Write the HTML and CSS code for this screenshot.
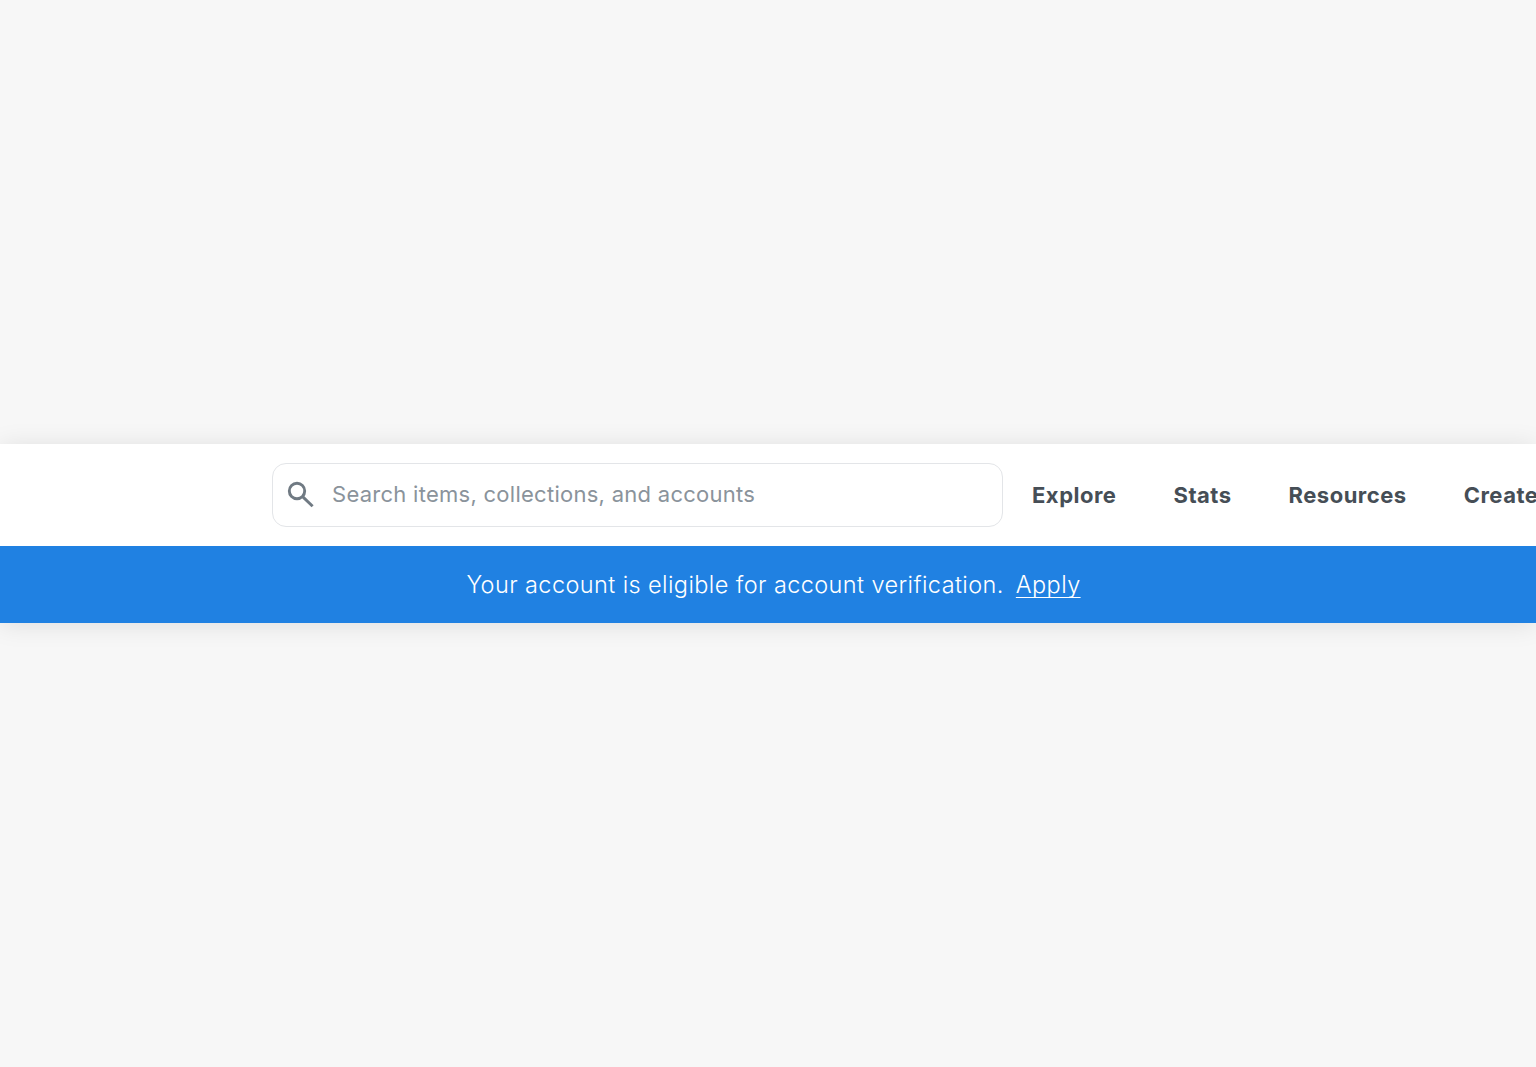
FILE: index.html
```html
<!DOCTYPE html>
<html lang="en">
<head>
<meta charset="utf-8">
<title>Account verification</title>
<link rel="stylesheet" href="styles.css">
</head>
<body>
<div class="page">
  <header class="header">
    <nav class="navbar">
      <div class="search">
        <svg class="search-icon" viewBox="0 0 28 28" width="28" height="28"><circle cx="10" cy="10" r="7.7"/><path d="M15.6 15.6 25.6 25.2"/></svg>
        <span class="placeholder">Search items, collections, and accounts</span>
      </div>
      <ul class="links">
        <li>Explore</li>
        <li>Stats</li>
        <li>Resources</li>
        <li>Create</li>
      </ul>
    </nav>
    <div class="banner">
      <span>Your account is eligible for account verification.</span>
      <a class="apply" href="#">Apply</a>
    </div>
  </header>
</div>
</body>
</html>
```
FILE: styles.css
```css
* { box-sizing: border-box; }
html, body { margin: 0; height: 100%; }
body { background: #f7f7f7; font-family: "Inter", "Liberation Sans", sans-serif; overflow: hidden; }
.page { height: 1067px; padding-top: 444px; overflow: hidden; }
.header { background: #fff; box-shadow: 0 2px 24px rgba(0,0,0,0.1); }
.navbar { height: 102px; display: flex; align-items: center; padding-left: 272px; white-space: nowrap; overflow: hidden; }
.search { width: 731px; height: 64px; flex: none; border: 1px solid #e3e5e8; border-radius: 14px; display: flex; align-items: center; padding-left: 14px; background: #fff; }
.search-icon { fill: none; stroke: #707a83; stroke-width: 2.9; flex: none; }
.placeholder { margin-left: 17px; margin-top: -2px; font-size: 22px; color: #8a939b; letter-spacing: 0.27px; }
.links { list-style: none; margin: 0 0 0 29px; padding: 0; display: flex; gap: 57px; font-size: 22px; font-weight: 700; color: #464e56; letter-spacing: 0.5px; }
.banner { height: 77px; background: #2081e2; color: #fff; display: flex; align-items: center; justify-content: center; gap: 12px; font-size: 23.5px; font-weight: 300; letter-spacing: 0.4px; padding-left: 11px; }
.apply { color: #fff; text-decoration: underline; text-decoration-thickness: 1px; text-underline-offset: 4px; text-decoration-skip-ink: none; }
```
